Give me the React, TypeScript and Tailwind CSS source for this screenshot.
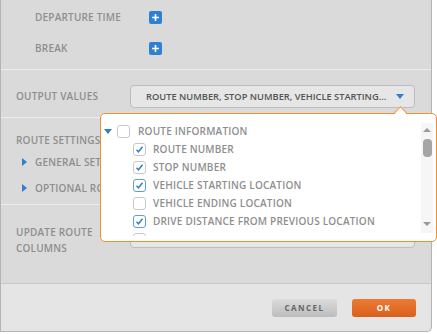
import { useState } from 'react';

type Item = { label: string; checked: boolean; focus?: boolean };

const ITEMS: Item[] = [
  { label: 'Route Number', checked: true },
  { label: 'Stop Number', checked: true },
  { label: 'Vehicle Starting Location', checked: true, focus: true },
  { label: 'Vehicle Ending Location', checked: false },
  { label: 'Drive Distance From Previous Location', checked: true, focus: true },
];

function PlusButton() {
  return (
    <span className="w-[13px] h-[13px] rounded-[2px] bg-[#2f80d1] flex items-center justify-center">
      <svg width="9" height="9" viewBox="0 0 9 9">
        <path d="M4.5 1v7M1 4.5h7" stroke="#fff" strokeWidth="1.6" />
      </svg>
    </span>
  );
}

function Checkbox({ checked, focus }: { checked: boolean; focus?: boolean }) {
  return (
    <span
      className={`w-[13px] h-[13px] rounded-[3px] border bg-white flex items-center justify-center shrink-0 ${
        focus ? 'border-[#5aa0e0]' : 'border-[#c8c8c8]'
      }`}
    >
      {checked && (
        <svg width="9" height="9" viewBox="0 0 9 9">
          <path d="M1.5 4.8l2 2L7.5 1.8" fill="none" stroke="#2f80d1" strokeWidth="1.5" />
        </svg>
      )}
    </span>
  );
}

function Caret() {
  return <span className="w-0 h-0 border-y-[4px] border-y-transparent border-l-[5px] border-l-[#2f80d1]" />;
}

export default function App() {
  const [items] = useState(ITEMS);

  return (
    <div className="w-[437px] h-[334px] bg-white relative overflow-hidden" style={{ fontFamily: '"Open Sans", "Liberation Sans", sans-serif' }}>
      <div className="w-[432px] h-[332px] bg-[#dadada] border-l border-r border-b border-[#b4b4b4] rounded-br-[5px] flex flex-col text-[10px] font-semibold uppercase tracking-[0.2px] text-[#8e8e8e]">
        {/* Stops extras */}
        <div className="h-[70px] border-b border-[#ececec] pt-[2px]">
          <div className="h-[31px] flex items-center pl-[34px]">
            <span className="w-[114px] shrink-0">Departure Time</span>
            <PlusButton />
          </div>
          <div className="h-[31px] flex items-center pl-[34px]">
            <span className="w-[114px] shrink-0">Break</span>
            <PlusButton />
          </div>
        </div>

        {/* Output values */}
        <div className="h-[48px] border-b border-[#ececec] pl-[15px] pr-[16px] pt-[15px]">
          <div className="h-[23px] flex items-center">
            <span className="w-[114px] shrink-0">Output Values</span>
            <div className="flex-1 min-w-0 h-[23px] rounded-[4px] border border-[#bdbdbd] bg-[#e6e6e6] flex items-center pl-[15px] pr-[10px] text-[#555] text-[9.3px] tracking-normal">
              <span className="flex-1 whitespace-nowrap">Route Number, Stop Number, Vehicle Starting...</span>
              <span className="w-0 h-0 border-x-[4px] border-x-transparent border-t-[5px] border-t-[#2f80d1]" />
            </div>
          </div>
        </div>

        {/* Route settings */}
        <div className="h-[87px] border-b border-[#ececec] pl-[15px] pt-[15px]">
          <div className="h-[14px] flex items-center">Route Settings</div>
          <div className="h-[26px] flex items-center gap-[8px] pl-[6px] mt-[2px]">
            <Caret />
            <span>General Settings</span>
          </div>
          <div className="h-[26px] flex items-center gap-[8px] pl-[6px]">
            <Caret />
            <span>Optional Route Settings</span>
          </div>
        </div>

        {/* Update route columns */}
        <div className="flex-1 flex items-start pl-[15px] pr-[16px] pt-[19px] border-b border-[#c8c8c8]">
          <div className="w-[114px] shrink-0 leading-[16px]">
            Update Route
            <br />
            Columns
          </div>
          <div className="flex-1 h-[24px] rounded-[4px] border border-[#bdbdbd] bg-[#e6e6e6]" />
        </div>

        {/* Footer */}
        <div className="h-[47px] bg-[#e5e5e5] rounded-br-[5px] flex items-center justify-end gap-[15px] pr-[15px]">
          <button className="w-[65px] h-[18px] rounded-[3px] bg-gradient-to-b from-[#dcdcdc] to-[#bcbcbc] text-[#666] text-[8px] font-bold tracking-[1.5px]">
            CANCEL
          </button>
          <button className="w-[64px] h-[18px] rounded-[3px] bg-gradient-to-b from-[#ec7a35] to-[#d9601c] text-white text-[8px] font-bold tracking-[1.5px]">
            OK
          </button>
        </div>
      </div>

      {/* Dropdown popup */}
      <div className="absolute left-[100px] top-[113px] w-[337px] h-[129px] bg-white border border-[#f0902f] rounded-[5px] text-[10px] font-semibold uppercase tracking-[0.2px] text-[#8e8e8e]">
        <span className="absolute right-[31px] top-[-6px] w-[9px] h-[9px] bg-white border-l border-t border-[#f0902f] rotate-45" />
        <div className="h-full flex">
          <div className="flex-1 overflow-hidden pt-[9px] mb-[5px]">
            <div className="h-[17px] flex items-center pl-[3px]">
              <span className="w-0 h-0 border-x-[4px] border-x-transparent border-t-[5px] border-t-[#2f80d1] mr-[5px]" />
              <Checkbox checked={false} />
              <span className="ml-[8px]">Route Information</span>
            </div>
            {items.map(it => (
              <div key={it.label} className="h-[18px] flex items-center pl-[32px]">
                <Checkbox checked={it.checked} focus={it.focus} />
                <span className="ml-[7px] whitespace-nowrap">{it.label}</span>
              </div>
            ))}
            <div className="h-[18px] flex items-center pl-[32px]">
              <Checkbox checked={false} />
            </div>
          </div>
          {/* Scrollbar */}
          <div className="w-[12px] mr-[3px] mt-[9px] mb-[8px] bg-[#f6f6f6] flex flex-col items-center pt-[5px]">
            <span className="w-0 h-0 border-x-[4px] border-x-transparent border-b-[4px] border-b-[#9a9a9a]" />
            <span className="w-[9px] h-[18px] rounded-[4px] bg-[#a5a5a5] mt-[7px]" />
            <span className="flex-1" />
            <span className="w-0 h-0 border-x-[4px] border-x-transparent border-t-[4px] border-t-[#9a9a9a] mb-[7px]" />
          </div>
        </div>
      </div>
    </div>
  );
}
